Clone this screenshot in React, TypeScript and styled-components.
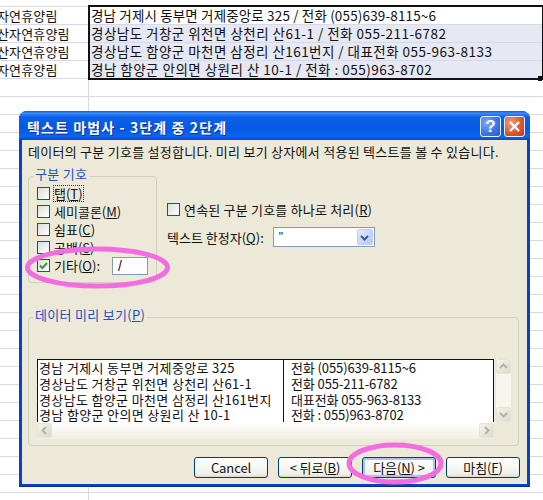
import styled, { createGlobalStyle } from "styled-components";

const FONT = `"Noto Sans CJK KR", "Liberation Sans", sans-serif`;

const GlobalStyle = createGlobalStyle`
  html, body {
    margin: 0;
    background: #fff;
  }
  * {
    box-sizing: border-box;
  }
`;

const sheetRows = [
  { name: "자연휴양림", value: "경남 거제시 동부면 거제중앙로 325 / 전화 (055)639-8115~6", spacing: 0.15 },
  { name: "산자연휴양림", value: "경상남도 거창군 위천면 상천리 산61-1 / 전화 055-211-6782", spacing: 0.47 },
  { name: "산자연휴양림", value: "경상남도 함양군 마천면 삼정리 산161번지 / 대표전화 055-963-8133", spacing: 0.46 },
  { name: "자연휴양림", value: "경남 함양군 안의면 상원리 산 10-1 / 전화 : 055)963-8702", spacing: 0.48 },
];

const delimiters = [
  { label: "탭(", key: "T", focus: true },
  { label: "세미콜론(", key: "M" },
  { label: "쉼표(", key: "C" },
  { label: "공백(", key: "S" },
];

const previewRows = [
  ["경남 거제시 동부면 거제중앙로 325", "전화 (055)639-8115~6"],
  ["경상남도 거창군 위천면 상천리 산61-1", "전화 055-211-6782"],
  ["경상남도 함양군 마천면 삼정리 산161번지", "대표전화 055-963-8133"],
  ["경남 함양군 안의면 상원리 산 10-1", "전화 : 055)963-8702"],
];

const Page = styled.div`
  position: relative;
  width: 543px;
  height: 500px;
  overflow: hidden;
  background: #fff;
  font-family: ${FONT};
  color: #111;
`;

const Sheet = styled.div`
  padding-top: 6px;
`;

const SheetRow = styled.div`
  display: flex;
  height: 18px;
  border-top: 1px solid #d5d9e8;
`;

const NameCell = styled.div`
  width: 89px;
  flex: none;
  border-right: 1px solid #d5d9e8;
  font-size: 13px;
  line-height: 17px;
  white-space: nowrap;
  text-indent: -3px;
  letter-spacing: 0.15px;
`;

const ValueCell = styled.div<{ $selected?: boolean; $spacing?: number }>`
  flex: 1;
  padding-left: 2px;
  font-size: 13.5px;
  line-height: 17px;
  white-space: nowrap;
  background: ${(p) => (p.$selected ? "#e6e8f4" : "transparent")};
  letter-spacing: ${(p) => p.$spacing ?? 0}px;
`;

const Selection = styled.div`
  position: absolute;
  left: 88px;
  top: 5px;
  width: 456px;
  height: 75px;
  border: 2px solid #111;
`;

const Handle = styled.div`
  position: absolute;
  right: 0;
  bottom: -3px;
  width: 4px;
  height: 5px;
  background: #111;
`;

const Dialog = styled.div`
  position: absolute;
  left: 19px;
  top: 111px;
  width: 511px;
  height: 376px;
  display: flex;
  flex-direction: column;
  background: #0a3fd0;
  border-radius: 8px 8px 0 0;
  padding: 0 3px 3px;
  box-shadow: inset 0 -1px 0 #0a2b9c;
`;

const TitleBar = styled.div`
  height: 29px;
  margin: 0 -3px;
  padding: 2px 5px 0 8px;
  display: flex;
  align-items: center;
  justify-content: space-between;
  border-radius: 8px 8px 0 0;
  background: linear-gradient(#0a5ee6 0%, #3a8cf5 8%, #0c62e8 20%, #0558e4 60%, #0a66f0 88%, #0548d0 100%);
`;

const Title = styled.div`
  color: #fff;
  font-size: 14px;
  font-weight: 700;
  letter-spacing: 1.1px;
  text-shadow: 1px 1px 0 #0a2f9e;
`;

const TitleButtons = styled.div`
  display: flex;
  gap: 3px;
`;

const CaptionButton = styled.div<{ $close?: boolean }>`
  width: 21px;
  height: 21px;
  display: flex;
  align-items: center;
  justify-content: center;
  border: 1px solid #e8eefc;
  border-radius: 3px;
  color: #fff;
  font-family: "Liberation Sans", sans-serif;
  font-size: 17px;
  font-weight: 700;
  background: ${(p) =>
    p.$close
      ? "radial-gradient(circle at 30% 30%, #ee9a7c, #d9552e 60%, #c23a1a)"
      : "radial-gradient(circle at 30% 30%, #7ea9f2, #3a73e0 60%, #2a5cc8)"};
`;

const Body = styled.div`
  flex: 1;
  display: flex;
  flex-direction: column;
  background: #ece9d8;
  padding: 3px 6px 0 6px;
`;

const Description = styled.div`
  font-size: 13px;
  line-height: 18px;
  white-space: nowrap;
  letter-spacing: 0.27px;
`;

const OptionsRow = styled.div`
  display: flex;
  margin-top: 7px;
`;

const GroupBox = styled.fieldset`
  margin: 0;
  padding: 0;
  border: 1px solid #d0d0bf;
  border-radius: 4px;
`;

const GroupLegend = styled.legend`
  position: relative;
  top: -2px;
  margin-left: -4px;
  padding: 0 2px;
  color: #1f52b8;
  font-size: 13px;
  line-height: 16px;
  letter-spacing: 0.3px;
`;

const DelimiterGroup = styled(GroupBox)`
  width: 129px;
  height: 115px;
  padding: 0 0 0 8px;
  display: flex;
  flex-direction: column;
`;

const OptionLine = styled.div`
  height: 18.2px;
  display: flex;
  align-items: center;
  gap: 4px;
  font-size: 13px;
  white-space: nowrap;
`;

const Box = styled.span`
  width: 13px;
  height: 13px;
  flex: none;
  display: flex;
  align-items: center;
  justify-content: center;
  border: 1px solid #1c5180;
  background: linear-gradient(135deg, #dcdcd7, #fff);
`;

const OptionText = styled.span<{ $focus?: boolean }>`
  outline: ${(p) => (p.$focus ? "1px dotted #333" : "none")};
  line-height: 15px;
`;

const Key = styled.span`
  text-decoration: underline;
`;

const SmallEdit = styled.div`
  width: 36px;
  height: 18px;
  margin-left: 8px;
  padding-left: 5px;
  border: 1px solid #7f9db9;
  background: #fff;
  font-family: "Liberation Sans", sans-serif;
  font-size: 14px;
  line-height: 16px;
`;

const RightOptions = styled.div`
  margin-left: 10px;
  padding-top: 32px;
  display: flex;
  flex-direction: column;
  gap: 9px;
`;

const MergeLine = styled(OptionLine)`
  letter-spacing: 0.2px;
`;

const QualifierLine = styled.div`
  display: flex;
  align-items: center;
  gap: 9px;
  font-size: 13px;
  white-space: nowrap;
`;

const Select = styled.div`
  width: 102px;
  height: 20px;
  display: flex;
  align-items: center;
  justify-content: space-between;
  padding: 1px 1px 1px 5px;
  border: 1px solid #7f9db9;
  background: #fff;
  font-family: "Liberation Sans", sans-serif;
  font-size: 12px;
`;

const ArrowButton = styled.div`
  width: 16px;
  height: 100%;
  display: flex;
  align-items: center;
  justify-content: center;
  border: 1px solid #bcd0f2;
  border-radius: 2px;
  background: linear-gradient(135deg, #e2ebfd, #b2c7f2);
`;

const PreviewGroup = styled(GroupBox)`
  margin-top: 26px;
  width: 491px;
  height: 137px;
  padding: 0 0 0 8px;
`;

const PreviewBody = styled.div`
  margin-top: 34px;
  display: flex;
  gap: 2px;
`;

const ListColumn = styled.div`
  width: 457px;
`;

const List = styled.div`
  height: 63px;
  overflow: hidden;
  border: 1px solid #111;
  border-bottom: 0;
  background: #fff;
`;

const ListRow = styled.div`
  display: flex;
  height: 15.8px;
  font-size: 13px;
  line-height: 15px;
  white-space: nowrap;
  letter-spacing: 0.35px;
`;

const ListCell = styled.div<{ $second?: boolean }>`
  height: 100%;
  padding-left: ${(p) => (p.$second ? "7px" : "1px")};
  width: ${(p) => (p.$second ? "auto" : "245px")};
  border-left: ${(p) => (p.$second ? "1px solid #111" : "0")};
  letter-spacing: ${(p) => (p.$second ? "-0.1px" : "inherit")};
`;

const HScroll = styled.div`
  height: 17px;
  display: flex;
  align-items: center;
  justify-content: space-between;
  background: linear-gradient(#fff, #f1efe2);
`;

const VScroll = styled.div`
  width: 15px;
  height: 63px;
  display: flex;
  flex-direction: column;
  justify-content: space-between;
  background: #f6f5ee;
`;

const ScrollButton = styled.div`
  width: 15px;
  height: 15px;
  display: flex;
  align-items: center;
  justify-content: center;
  border: 1px solid #e6e4d8;
  border-radius: 2px;
  background: linear-gradient(135deg, #f4f3ec, #dcdacb);
`;

const ButtonRow = styled.div`
  margin-top: 11px;
  display: flex;
  justify-content: flex-end;
  gap: 10px;
  padding-right: 1px;
`;

const Button = styled.div<{ $default?: boolean }>`
  width: 74px;
  height: 21px;
  display: flex;
  align-items: center;
  justify-content: center;
  border: 1px solid #003c74;
  border-radius: 3px;
  background: linear-gradient(#fff, #f0f0ea 85%, #dcd8c8);
  box-shadow: ${(p) => (p.$default ? "inset 0 0 0 2px #a9c4ee" : "none")};
  font-size: 13px;
  white-space: nowrap;
  letter-spacing: -0.1px;
`;

const Marks = styled.svg`
  position: absolute;
  inset: 0;
  pointer-events: none;
`;

const Chevron = ({ d, color = "#b5b3a6" }: { d: string; color?: string }) => (
  <svg width="9" height="9" viewBox="0 0 9 9" fill="none">
    <path d={d} stroke={color} strokeWidth="2" />
  </svg>
);

export default function App() {
  return (
    <Page>
      <GlobalStyle />
      <Sheet>
        {Array.from({ length: 28 }).map((_, i) => (
          <SheetRow key={i}>
            <NameCell>{sheetRows[i]?.name}</NameCell>
            <ValueCell $selected={i > 0 && i < 4} $spacing={sheetRows[i]?.spacing}>
              {sheetRows[i]?.value}
            </ValueCell>
          </SheetRow>
        ))}
      </Sheet>
      <Selection>
        <Handle />
      </Selection>

      <Dialog>
        <TitleBar>
          <Title>텍스트 마법사 - 3단계 중 2단계</Title>
          <TitleButtons>
            <CaptionButton>?</CaptionButton>
            <CaptionButton $close>
              <svg width="13" height="13" viewBox="0 0 13 13">
                <path d="M2 2l9 9M11 2l-9 9" stroke="#fff" strokeWidth="2.4" />
              </svg>
            </CaptionButton>
          </TitleButtons>
        </TitleBar>
        <Body>
          <Description>데이터의 구분 기호를 설정합니다. 미리 보기 상자에서 적용된 텍스트를 볼 수 있습니다.</Description>
          <OptionsRow>
            <DelimiterGroup>
              <GroupLegend>구분 기호</GroupLegend>
              {delimiters.map((d) => (
                <OptionLine key={d.key}>
                  <Box />
                  <OptionText $focus={d.focus}>
                    {d.label}
                    <Key>{d.key}</Key>)
                  </OptionText>
                </OptionLine>
              ))}
              <OptionLine>
                <Box>
                  <svg width="11" height="11" viewBox="0 0 11 11" fill="none">
                    <path d="M2 5.5l2.4 2.6L9 3" stroke="#2f9a3c" strokeWidth="2" />
                  </svg>
                </Box>
                <OptionText>
                  기타(<Key>O</Key>):
                </OptionText>
                <SmallEdit>/</SmallEdit>
              </OptionLine>
            </DelimiterGroup>
            <RightOptions>
              <MergeLine>
                <Box />
                <OptionText>
                  연속된 구분 기호를 하나로 처리(<Key>R</Key>)
                </OptionText>
              </MergeLine>
              <QualifierLine>
                <span>
                  텍스트 한정자(<Key>Q</Key>):
                </span>
                <Select>
                  <span>"</span>
                  <ArrowButton>
                    <Chevron d="M1 3l3.5 3.5L8 3" color="#3a5a94" />
                  </ArrowButton>
                </Select>
              </QualifierLine>
            </RightOptions>
          </OptionsRow>

          <PreviewGroup>
            <GroupLegend>
              데이터 미리 보기(<Key>P</Key>)
            </GroupLegend>
            <PreviewBody>
              <ListColumn>
                <List>
                  {previewRows.map((row) => (
                    <ListRow key={row[0]}>
                      <ListCell>{row[0]}</ListCell>
                      <ListCell $second>{row[1]}</ListCell>
                    </ListRow>
                  ))}
                </List>
                <HScroll>
                  <ScrollButton>
                    <Chevron d="M6 1L2.5 4.5 6 8" />
                  </ScrollButton>
                  <ScrollButton>
                    <Chevron d="M3 1l3.5 3.5L3 8" />
                  </ScrollButton>
                </HScroll>
              </ListColumn>
              <VScroll>
                <ScrollButton>
                  <Chevron d="M1 6l3.5-3.5L8 6" />
                </ScrollButton>
                <ScrollButton>
                  <Chevron d="M1 3l3.5 3.5L8 3" />
                </ScrollButton>
              </VScroll>
            </PreviewBody>
          </PreviewGroup>

          <ButtonRow>
            <Button>Cancel</Button>
            <Button>
              &lt; 뒤로(<Key>B</Key>)
            </Button>
            <Button $default>
              다음(<Key>N</Key>) &gt;
            </Button>
            <Button>
              마침(<Key>F</Key>)
            </Button>
          </ButtonRow>
        </Body>
      </Dialog>

      <Marks width="543" height="500" viewBox="0 0 543 500" fill="none">
        <ellipse cx="97.5" cy="267.5" rx="70" ry="18.5" stroke="#f46de0" strokeWidth="5" />
        <ellipse cx="395" cy="463.5" rx="46" ry="18.5" stroke="#f46de0" strokeWidth="5" />
      </Marks>
    </Page>
  );
}
